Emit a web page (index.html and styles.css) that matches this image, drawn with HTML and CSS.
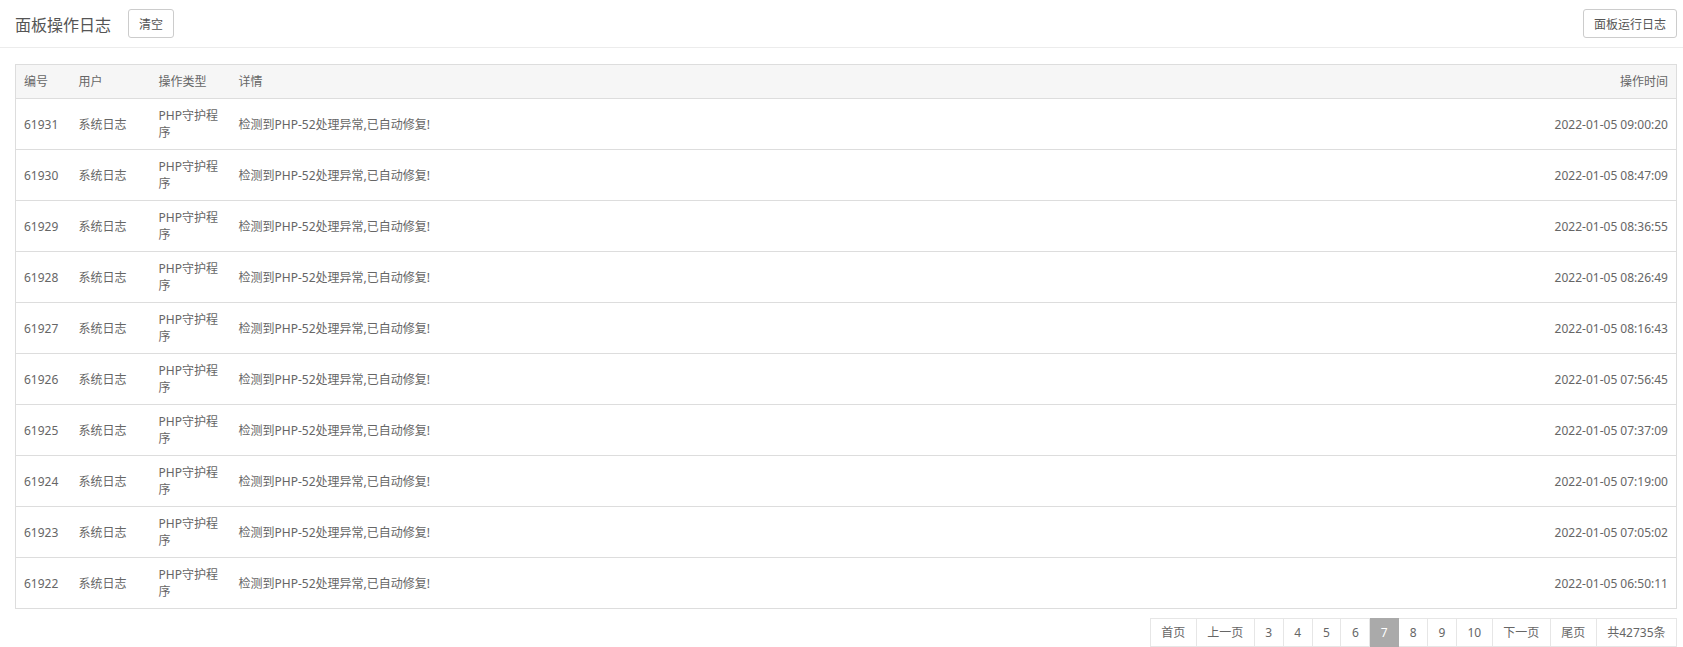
FILE: index.html
```html
<!DOCTYPE html>
<html lang="zh-CN">

<head>
    <meta charset="UTF-8">
    <meta name="viewport" content="width=device-width, initial-scale=1.0">
    <title>面板操作日志</title>
    <link rel="stylesheet" href="styles.css">
</head>

<body>
    <header class="page-header">
        <div class="header-left">
            <h1 class="page-title">面板操作日志</h1>
            <button class="btn">清空</button>
        </div>
        <div class="header-right">
            <button class="btn">面板运行日志</button>
        </div>
    </header>
    <main class="content">
        <table class="log-table">
            <colgroup>
                <col class="col-id">
                <col class="col-user">
                <col class="col-type">
                <col>
                <col class="col-time">
            </colgroup>
            <thead>
                <tr>
                    <th>编号</th>
                    <th>用户</th>
                    <th>操作类型</th>
                    <th>详情</th>
                    <th class="text-right">操作时间</th>
                </tr>
            </thead>
            <tbody>
                <tr><td>61931</td><td>系统日志</td><td>PHP守护程序</td><td>检测到PHP-52处理异常,已自动修复!</td><td class="text-right">2022-01-05 09:00:20</td></tr>
                <tr><td>61930</td><td>系统日志</td><td>PHP守护程序</td><td>检测到PHP-52处理异常,已自动修复!</td><td class="text-right">2022-01-05 08:47:09</td></tr>
                <tr><td>61929</td><td>系统日志</td><td>PHP守护程序</td><td>检测到PHP-52处理异常,已自动修复!</td><td class="text-right">2022-01-05 08:36:55</td></tr>
                <tr><td>61928</td><td>系统日志</td><td>PHP守护程序</td><td>检测到PHP-52处理异常,已自动修复!</td><td class="text-right">2022-01-05 08:26:49</td></tr>
                <tr><td>61927</td><td>系统日志</td><td>PHP守护程序</td><td>检测到PHP-52处理异常,已自动修复!</td><td class="text-right">2022-01-05 08:16:43</td></tr>
                <tr><td>61926</td><td>系统日志</td><td>PHP守护程序</td><td>检测到PHP-52处理异常,已自动修复!</td><td class="text-right">2022-01-05 07:56:45</td></tr>
                <tr><td>61925</td><td>系统日志</td><td>PHP守护程序</td><td>检测到PHP-52处理异常,已自动修复!</td><td class="text-right">2022-01-05 07:37:09</td></tr>
                <tr><td>61924</td><td>系统日志</td><td>PHP守护程序</td><td>检测到PHP-52处理异常,已自动修复!</td><td class="text-right">2022-01-05 07:19:00</td></tr>
                <tr><td>61923</td><td>系统日志</td><td>PHP守护程序</td><td>检测到PHP-52处理异常,已自动修复!</td><td class="text-right">2022-01-05 07:05:02</td></tr>
                <tr><td>61922</td><td>系统日志</td><td>PHP守护程序</td><td>检测到PHP-52处理异常,已自动修复!</td><td class="text-right">2022-01-05 06:50:11</td></tr>
            </tbody>
        </table>
        <div class="pager">
            <a href="#">首页</a>
            <a href="#">上一页</a>
            <a href="#">3</a>
            <a href="#">4</a>
            <a href="#">5</a>
            <a href="#">6</a>
            <span class="current">7</span>
            <a href="#">8</a>
            <a href="#">9</a>
            <a href="#">10</a>
            <a href="#">下一页</a>
            <a href="#">尾页</a>
            <span>共42735条</span>
        </div>
    </main>
</body>

</html>
```

FILE: styles.css
```css
body {
    margin: 0;
    font-family: "Noto Sans", "Noto Sans CJK SC", sans-serif;
    font-size: 12px;
    color: #666;
    background-color: #fff;
}

.page-header {
    display: flex;
    justify-content: space-between;
    align-items: center;
    height: 47px;
    padding: 0 6px 0 15px;
    border-bottom: 1px solid #ececec;
}

.header-left {
    display: flex;
    align-items: center;
}

.page-title {
    margin: 0 17px 0 0;
    font-size: 16px;
    font-weight: normal;
    color: #555;
}

.btn {
    height: 29px;
    padding: 0 10px;
    border: 1px solid #ccc;
    border-radius: 3px;
    background-color: #fff;
    font-family: inherit;
    font-size: 12px;
    color: #555;
    cursor: pointer;
}

.content {
    padding: 16px 6px 0 15px;
}

.log-table {
    width: 100%;
    border-collapse: collapse;
    table-layout: fixed;
    border: 1px solid #ddd;
}

.col-id {
    width: 55px;
}

.col-user {
    width: 80px;
}

.col-type {
    width: 80px;
}

.col-time {
    width: 200px;
}

.log-table th,
.log-table td {
    padding: 8px;
    line-height: 17px;
    text-align: left;
    vertical-align: middle;
    font-weight: normal;
}

.log-table th {
    background-color: #f6f6f6;
    border-bottom: 1px solid #ddd;
}

.log-table td {
    border-top: 1px solid #ddd;
}

.log-table .text-right {
    text-align: right;
}

.pager {
    display: flex;
    justify-content: flex-end;
    margin-top: 9px;
}

.pager a,
.pager span {
    display: block;
    height: 27px;
    line-height: 27px;
    padding: 0 10.5px;
    border: 1px solid #e6e6e6;
    border-left: none;
    color: #666;
    text-decoration: none;
}

.pager a:first-child {
    border-left: 1px solid #e6e6e6;
}

.pager .current {
    background-color: #aaa;
    border-color: #aaa;
    color: #fff;
}
```
